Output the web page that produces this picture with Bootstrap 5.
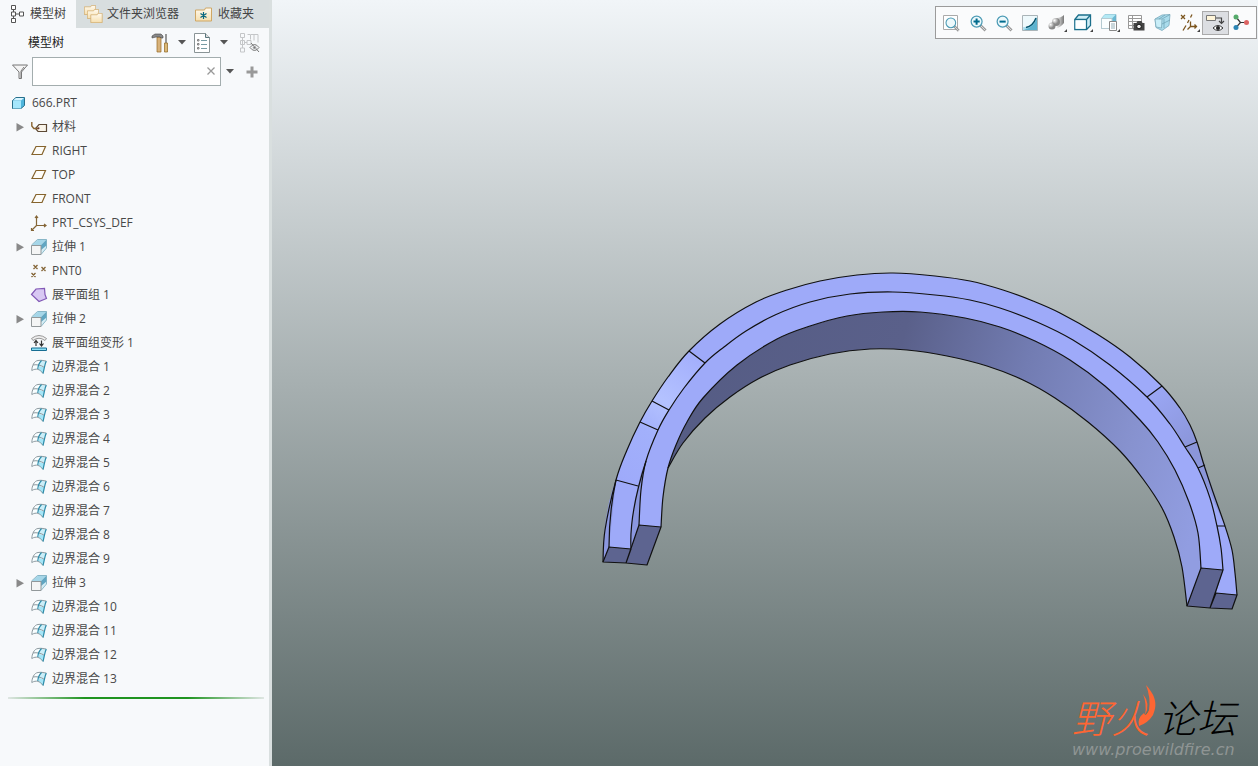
<!DOCTYPE html>
<html lang="zh-CN">
<head>
<meta charset="utf-8">
<meta name="viewport" content="width=device-width, initial-scale=1">
<title>666.PRT</title>
<link href="https://cdn.jsdelivr.net/npm/bootstrap@5.3.0/dist/css/bootstrap.min.css" rel="stylesheet">
<script src="https://cdn.jsdelivr.net/npm/bootstrap@5.3.0/dist/js/bootstrap.bundle.min.js"></script>
<style>
body{font-family:"Open Sans","Noto Sans CJK SC",sans-serif;font-size:12px;line-height:24px;color:#484848}
svg{display:block;flex:none;overflow:visible}
.side{width:272px;background:#f7f9fb;border-right:3px solid #d9dfdf}
.tabs{background:#d8dedf;height:28px}
.tabs button{border:0;background:none;color:#444;padding:0 8px 0 8px;gap:4px;line-height:28px}
.tabs button.active{background:#f7f9fb;width:76px;padding-left:10px;gap:6px}
.tool{border:0;background:none;padding:0;color:#555}
.tool.pair{gap:9px;margin-right:8px}
.headrow{height:29px;padding:0 9px 0 28px;color:#222}
.findrow{height:29px;padding-left:12px;gap:4px}
.find{width:189px}
.find input{height:29px;border:1px solid #a3adae;border-radius:0;font-size:12px;padding:2px 24px 2px 6px;background:#fff}
.find button{position:absolute;right:5px;top:9px}
.findrow .tool.more{margin:0 8px 0 1px}
.tree{padding-top:5px}
.tree li{height:24px;padding-left:31px;gap:5px}
.tree li.root{padding-left:11px}
.tree li.parent{padding-left:16px}
.tree button{width:10px;height:16px;border:0;background:none;padding:0}
.tree span{white-space:nowrap}
.endline{height:2px;margin:6px 5px 0 8px;background:linear-gradient(90deg,#dfe6e3,#1f9420 30%,#1f9420 70%,#dfe6e3)}
.view{background:linear-gradient(#f1f5f8,#5c6a69)}
.scene{position:absolute;inset:0;width:100%;height:100%}
.bar{position:absolute;top:6px;right:1px;width:322px;height:33px;padding:0 1px 0 2px;background:#fafbfc;border:1px solid #9b9b9b}
.bar button{flex:1 1 0;height:24px;border:1px solid transparent;background:none;padding:0}
.bar button.on{background:#dcdee2;border-color:#aaa}
.wm{position:absolute;right:18px;bottom:8px;width:168px}
.wm .name{font-family:"Liberation Sans","Noto Sans CJK SC",sans-serif;font-style:italic;font-weight:300;font-size:39px;line-height:38px;white-space:nowrap;color:#000;margin-bottom:3px}
.wm .name b{font-weight:300;color:#ff6633;margin-right:8px}
.wm .site{font:italic 16px/16px "DejaVu Sans",sans-serif;color:#8f9594}
.wm svg{position:absolute;left:64px;top:-17px}
</style>
</head>
<body>
<svg width="0" height="0" class="position-absolute" aria-hidden="true">
<defs>
<linearGradient id="gb" x1="0" x2="1" y2="1"><stop stop-color="#fff"/><stop offset="1" stop-color="#5fbfdf"/></linearGradient>
<linearGradient id="gf" x2="0" y2="1"><stop stop-color="#fffaf0"/><stop offset="1" stop-color="#f6dfae"/></linearGradient>
<symbol id="folder" viewBox="0 0 17 14"><path d="M.5 13.500V2.500h9l1-2h6v13z" fill="url(#gf)" stroke="#cfa765"/></symbol>
<symbol id="plane" viewBox="0 0 16 16"><path d="M5 3.500h9.500L11 11.500H1z" fill="#fdfcf8" stroke="#86642d" stroke-width="1.200"/></symbol>
<symbol id="ext" viewBox="0 0 16 16"><path d="M1 6 7 .5h8.500L10 6z" fill="#a5d6e8"/><path d="M10 6 15.500.5V9L10 15z" fill="#d4edf5"/><path d="M10 6 15.500.5v6L10 11z" fill="#61a6c2"/><path d="M.5 6 6.500.5h9V9L10 15.500" fill="none" stroke="#75aabd" stroke-width=".8"/><path d="M.5 6.500h9.500v9H.5z" fill="#f4f5f5" stroke="#92989a"/></symbol>
<symbol id="bb" viewBox="0 0 16 16"><path d="M.8 11.500C1 7 3 2 7 1.500c3-.5 5 0 8.300.6C14 5 13.500 9 12 14.500 9 11 6 9 .8 11.500z" fill="#f8feff"/><path d="M8 7c2 .3 3.700 1 5.700 1.500L12 14.500 7.500 10.500z" fill="#a5e5f7"/><path d="M10 2l5.300.1-1.500 6L8.500 6z" fill="#cbeef8"/><path d="M.8 11.500C1 7 3 2 7 1.500c3-.5 5 0 8.300.6M.8 11.500C5 9 9 10 12 14.500M2 6c4-.8 8 .2 11.700 2.500" fill="none" stroke="#8d9aa0"/><path d="M15.300 2.100C13.600 5 13.500 9 12 14.500M10.500 1.500C8 4 7 6.500 6.800 10" fill="none" stroke="#2c8ba9" stroke-width="1.200"/></symbol>
<symbol id="mag" viewBox="0 0 18 18"><path d="m10.500 10.500 6 6" stroke="#999" stroke-width="3"/><path d="m10.500 10.500 6 6" stroke="#ddd"/><circle cx="7" cy="7" r="5.800" fill="#edf9fc" stroke="#4c9bb5" stroke-width="1.300"/></symbol>
<symbol id="caret" viewBox="0 0 8 5"><path d="M0 0h8L4 4.500z" fill="#555"/></symbol>
<symbol id="tri" viewBox="0 0 8 10"><path d="M.5 1v8.500L8 5.200z" fill="#898989"/></symbol>
<linearGradient id="inner" gradientUnits="userSpaceOnUse" x1="660" y1="400" x2="1190" y2="540"><stop stop-color="#555c84"/><stop offset=".4" stop-color="#5a608a"/><stop offset=".63" stop-color="#727cb2"/><stop offset=".85" stop-color="#8792cf"/><stop offset="1" stop-color="#919de1"/></linearGradient>
<linearGradient id="outer" gradientUnits="userSpaceOnUse" x1="620" y1="480" x2="710" y2="350"><stop stop-color="#9eaafa"/><stop offset=".35" stop-color="#a2b0fb"/><stop offset=".57" stop-color="#b4c2ff"/><stop offset="1" stop-color="#9faafb"/></linearGradient>
<linearGradient id="rside" gradientUnits="userSpaceOnUse" x1="1150" y1="392" x2="1190" y2="445"><stop stop-color="#9ba7f5"/><stop offset="1" stop-color="#8b96da"/></linearGradient>
</defs></svg>

<div class="d-flex min-vh-100">
<aside class="side flex-shrink-0">
 <nav class="tabs d-flex" aria-label="导航器">
  <button class="active d-flex align-items-center"><svg width="14" height="18" fill="#fff" stroke="#555"><path d="M3.500 4.500v9M3.500 9h6" fill="none"/><path d="M1.500.500h4v4h-4zM1.500 7h4v4h-4zM9.500 7h4v4h-4zM1.500 13.500h4v4h-4z"/></svg>模型树</button>
  <button class="d-flex align-items-center"><svg width="19" height="18"><use href="#folder" width="12" height="10"/><use href="#folder" x="3" y="4" width="12" height="10"/><use href="#folder" x="6" y="8" width="13" height="10"/></svg>文件夹浏览器</button>
  <button class="d-flex align-items-center"><svg width="19" height="15"><use href="#folder" width="17" height="15"/><path d="M8.500 5v7M5.500 6.500l6 4M11.500 6.500l-6 4" stroke="#08677f" stroke-width="1.200"/></svg>收藏夹</button>
 </nav>
 <div class="headrow d-flex align-items-center">
  <span class="me-auto">模型树</span>
  <button class="tool pair d-flex align-items-center" aria-label="设置"><svg width="17" height="20"><path d="M5 4h4v15H5z" fill="#d8b27a" stroke="#956724" stroke-width=".7"/><path d="M0 5V3l3-2h6l2 2v2H9L8 4H4z" fill="#888" stroke="#444" stroke-width=".6"/><path d="M14 1v9" stroke="#777" stroke-width="1.500"/><path d="M12.500 10h3v9h-3z" fill="#dcb877" stroke="#8d641f" stroke-width=".7"/></svg><svg width="8" height="5"><use href="#caret"/></svg></button>
  <button class="tool pair d-flex align-items-center" aria-label="显示"><svg width="17" height="20"><path d="M.5.500h11l4 4v15H.5z" fill="#fff" stroke="#8a9496"/><path d="M11.500.500v4h4" fill="#ddd" stroke="#59767c"/><path d="M7 7.500h6M7 11.500h6M7 15.500h6" stroke="#789ca4"/><path d="M3.500 6.500h1.500v1.500H3.500zM3.500 10.500h1.500v1.500H3.500zM3.500 14.500h1.500v1.500H3.500z" stroke="#666" stroke-width=".8" fill="none"/></svg><svg width="8" height="5"><use href="#caret"/></svg></button>
  <button class="tool ms-1" aria-label="隐藏树列"><svg width="20" height="20" fill="none" stroke="#c4c6c8"><path d="M.5.500h4v4h-4zM.5 7.500h4v4h-4zM7 7.500h4v4H7zM.5 15h4v4h-4zM2.500 4v11M4.500 9.500H7M7.500 1.500h3v5M11 1.500h3v6M14 1.500h4v8"/><path d="M10 14.500q4.500-6 9 0-4.500 6-9 0M11 10l8 9" stroke="#777"/><circle cx="14.500" cy="14.500" r="1.500" fill="#777"/></svg></button>
 </div>
 <div class="findrow d-flex align-items-center">
  <svg width="16" height="16"><path d="M.5 1h15L9.500 8v6.500H7V8z" fill="#f5f5f5" stroke="#777"/><path d="M12 3 9 7v7" fill="none" stroke="#777"/></svg>
  <div class="find position-relative"><input class="form-control" type="text" aria-label="筛选"><button class="tool" aria-label="清除"><svg width="10" height="10"><path d="m1.500 1.500 7 7m0-7-7 7" stroke="#999" stroke-width="1.300"/></svg></button></div>
  <button class="tool more" aria-label="选项"><svg width="8" height="5"><use href="#caret"/></svg></button>
  <button class="tool" aria-label="添加"><svg width="12" height="12"><path d="M6 .5v11M.5 6h11" stroke="#999" stroke-width="3"/></svg></button>
 </div>
 <ul class="tree list-unstyled mb-0">
  <li class="root d-flex align-items-center"><svg width="16" height="16"><path d="M1.500 5.500 5 2.500h8.500v8L10 13.500H1.500z" fill="#4fb5dc" stroke="#28708c"/><path d="M2 5.500 5 3h8l-3 2.500z" fill="#d8f5ff"/><path d="M2 6h8v7.500H2z" fill="#a5e7fc"/></svg><span>666.PRT</span></li>
  <li class="parent d-flex align-items-center"><button aria-label="展开"><svg width="8" height="10"><use href="#tri"/></svg></button><svg width="16" height="16"><path d="M8 5.500h7.500v7H7L4.500 9.500z" fill="#f9f4e9" stroke="#5d4935" stroke-width="1.200"/><path d="M.8 3v4l2 2.500h4.500" fill="none" stroke="#8b6531" stroke-width="1.400"/><circle cx="7.500" cy="9.300" r="1" fill="#633"/></svg><span>材料</span></li>
  <li class="d-flex align-items-center"><svg width="16" height="16"><use href="#plane"/></svg><span>RIGHT</span></li>
  <li class="d-flex align-items-center"><svg width="16" height="16"><use href="#plane"/></svg><span>TOP</span></li>
  <li class="d-flex align-items-center"><svg width="16" height="16"><use href="#plane"/></svg><span>FRONT</span></li>
  <li class="d-flex align-items-center"><svg width="16" height="16" fill="none" stroke="#846536" stroke-width="1.200"><path d="M5.500 1.500v9h9M5.500 10.500l-5 5M4 3l1.500-2L7 3M13 9l2 1.500L13 12M.5 13v2.500H3"/></svg><span>PRT_CSYS_DEF</span></li>
  <li class="parent d-flex align-items-center"><button aria-label="展开"><svg width="8" height="10"><use href="#tri"/></svg></button><svg width="16" height="16"><use href="#ext"/></svg><span>拉伸 1</span></li>
  <li class="d-flex align-items-center"><svg width="16" height="16" stroke="#846536" stroke-width="1.300"><path d="m2.500 2 4 4m0-4-4 4M10.500 4l4 4m0-4-4 4M.5 10l4 4m0-4-4 4"/></svg><span>PNT0</span></li>
  <li class="d-flex align-items-center"><svg width="16" height="16"><path d="M.5 7.500 5 2l8.500-.5.5 6 1.500 4L8 14.500z" fill="#d8c8f3" stroke="#8259b6" stroke-width="1.200"/></svg><span>展平面组 1</span></li>
  <li class="parent d-flex align-items-center"><button aria-label="展开"><svg width="8" height="10"><use href="#tri"/></svg></button><svg width="16" height="16"><use href="#ext"/></svg><span>拉伸 2</span></li>
  <li class="d-flex align-items-center"><svg width="16" height="16"><path d="M.5 3.500Q8-2.500 15.500 3.500L14 5.500Q8 1 2 5.500z" fill="#eee" stroke="#999"/><path d="M5 11V6M3 8l2-2.500L7 8M10.500 5.500v5M8.500 8.500l2 2.500 2-2.500" fill="none" stroke="#333" stroke-width="1.200"/><path d="M.5 13h15v2.500H.5z" fill="#8de0f5" stroke="#176d92"/></svg><span>展平面组变形 1</span></li>
  <li class="d-flex align-items-center"><svg width="16" height="16"><use href="#bb"/></svg><span>边界混合 1</span></li>
  <li class="d-flex align-items-center"><svg width="16" height="16"><use href="#bb"/></svg><span>边界混合 2</span></li>
  <li class="d-flex align-items-center"><svg width="16" height="16"><use href="#bb"/></svg><span>边界混合 3</span></li>
  <li class="d-flex align-items-center"><svg width="16" height="16"><use href="#bb"/></svg><span>边界混合 4</span></li>
  <li class="d-flex align-items-center"><svg width="16" height="16"><use href="#bb"/></svg><span>边界混合 5</span></li>
  <li class="d-flex align-items-center"><svg width="16" height="16"><use href="#bb"/></svg><span>边界混合 6</span></li>
  <li class="d-flex align-items-center"><svg width="16" height="16"><use href="#bb"/></svg><span>边界混合 7</span></li>
  <li class="d-flex align-items-center"><svg width="16" height="16"><use href="#bb"/></svg><span>边界混合 8</span></li>
  <li class="d-flex align-items-center"><svg width="16" height="16"><use href="#bb"/></svg><span>边界混合 9</span></li>
  <li class="parent d-flex align-items-center"><button aria-label="展开"><svg width="8" height="10"><use href="#tri"/></svg></button><svg width="16" height="16"><use href="#ext"/></svg><span>拉伸 3</span></li>
  <li class="d-flex align-items-center"><svg width="16" height="16"><use href="#bb"/></svg><span>边界混合 10</span></li>
  <li class="d-flex align-items-center"><svg width="16" height="16"><use href="#bb"/></svg><span>边界混合 11</span></li>
  <li class="d-flex align-items-center"><svg width="16" height="16"><use href="#bb"/></svg><span>边界混合 12</span></li>
  <li class="d-flex align-items-center"><svg width="16" height="16"><use href="#bb"/></svg><span>边界混合 13</span></li>
 </ul>
 <div class="endline"></div>
</aside>

<main class="view position-relative flex-grow-1 overflow-hidden">
 <svg class="scene" viewBox="272 0 986 766" stroke-linejoin="round" role="img" aria-label="零件模型">
  <path id="fInner" fill="url(#inner)"/>
  <path id="fOuter" fill="#9eaaf9"/>
  <path id="fLeft" fill="url(#outer)" d="M617 480Q626 450 640 423Q660 384 689 351L705 363Q684 388 669 410L658 430Q648 447 638 486z"/>
  <path fill="url(#rside)" d="M1147 397 1162 386Q1186 412 1197 442L1205 466 1225 526H1217Q1210 495 1198 468 1180 433 1147 397z"/>
  <path fill="#9eaaf9" d="m1204 480 21 46h-8z"/>
  <path fill="#8b97df" d="M603 562Q603 512 616 480L609 547zM638 486Q641 470 646 461L641 490 639 525 631 549Q631 514 638 486z"/>
  <path id="fFront" fill="#9eaaf9"/>
  <g fill="none" stroke="#111" stroke-width="1.200"><path id="l1"/><path id="l2"/><path id="l3"/><path id="l4"/>
  <path d="M689 351 705 363M652 401 669 410M640 422 658 430M616 480 638 486M1147 397 1162 386M1185 447 1197 442M1198 468 1205 465M1217 526H1225M616 480Q609 512 609 547M646 461Q629 514 631 549"/></g>
  <g fill="#5d6490" stroke="#111" stroke-width="1.200"><path d="M609 547 631 549 626 563 603 562zM639 525 661 527 647 565 626 563zM1216 593 1237 595 1232 609 1210 608zM1201 568 1223 570 1210 608 1187 606z"/></g>
 </svg>

 <div class="bar d-flex align-items-center" role="toolbar" aria-label="视图工具栏">
  <button aria-label="重新调整" class="d-flex align-items-center justify-content-center"><svg width="16" height="16"><path d="M.5.500h14v14H.5z" fill="#fff" stroke="#aaa"/><use href="#mag" x="2" y="2" width="15" height="15"/></svg></button>
  <button aria-label="放大" class="d-flex align-items-center justify-content-center"><svg width="16" height="16"><use href="#mag" width="17" height="17"/><path d="M6.600 3.500v6.200M3.500 6.600h6.200" stroke="#006b8e" stroke-width="2"/></svg></button>
  <button aria-label="缩小" class="d-flex align-items-center justify-content-center"><svg width="16" height="16"><use href="#mag" width="17" height="17"/><path d="M3.500 6.600h6.200" stroke="#006b8e" stroke-width="2"/></svg></button>
  <button aria-label="重画" class="d-flex align-items-center justify-content-center"><svg width="16" height="16"><path d="M.5.500h15v15H.5z" fill="url(#gb)" stroke="#aab4b8"/><path d="M15 2v13H2q11-3 13-13z" fill="#5db3cf"/><path d="M1 1h14q-1 8-10 11H1z" fill="#eef9fc"/><path d="M4 12.500Q11 11 14 3" fill="none" stroke="#07536c" stroke-width="1.500"/></svg></button>
  <button aria-label="渲染选项" class="d-flex align-items-center justify-content-center"><svg width="18" height="18"><defs><radialGradient id="ball" cx=".3" cy=".3"><stop stop-color="#fff"/><stop offset="1" stop-color="#888"/></radialGradient><linearGradient id="cyl"><stop stop-color="#fff"/><stop offset="1" stop-color="#777"/></linearGradient></defs><path d="M8 4q5 0 8-3v8q-4 5-8 5z" fill="url(#cyl)"/><circle cx="8" cy="8" r="4" fill="url(#ball)"/><circle cx="4" cy="12" r="3.500" fill="url(#ball)"/><path d="M19 15v3h-3z" fill="#444"/></svg></button>
  <button aria-label="显示样式" class="d-flex align-items-center justify-content-center"><svg width="18" height="18"><path d="M.8 5.500 4.500 1h12v10.500l-4 4H.8z" fill="#cfeef7" stroke="#1b6f8b" stroke-width="1.300"/><path d="M.8 5.500h11.700v10M12.500 5.500l4-4.500" fill="none" stroke="#1b6f8b" stroke-width="1.300"/><path d="M1.600 6.300h10v8.500h-10z" fill="#fff"/><path d="M19 15v3h-3z" fill="#444"/></svg></button>
  <button aria-label="已保存方向" class="d-flex align-items-center justify-content-center"><svg width="18" height="18"><path d="M.5 4.500 4 .500h11v11l-4 3H.5z" fill="#69b9d4" stroke="#77aabd" stroke-width=".7"/><path d="M.5 4.500 4 .500h11l-4 4z" fill="#b4e9f5"/><path d="M.5 4.500H11v10H.5z" fill="#fafeff" stroke="#b5cbd2"/><path d="M8.500 7.500h7v9h-7z" fill="#fff" stroke="#888"/><path d="M10 10h4M10 12h4M10 14h4" stroke="#789aa5" stroke-width=".8"/><path d="M19 15v3h-3z" fill="#444"/></svg></button>
  <button aria-label="视图管理器" class="d-flex align-items-center justify-content-center"><svg width="17" height="17"><path d="M.5 1.500h13v13H.5zM.5 4.500h13M.5 7.500h13M.5 11.500h13M4.500 1.500v13" fill="#fff" stroke="#999"/><path d="M5.500 9h3l1-2h4l1 2h2v7.500h-11z" fill="#444"/><circle cx="11" cy="12.500" r="2.300" fill="#eee" stroke="#111"/></svg></button>
  <button aria-label="透视图" class="d-flex align-items-center justify-content-center"><svg width="17" height="17"><path d="M1 5 8 1l8-.5-1 11-7 5-6-3z" fill="#aadcec" stroke="#79aabd" stroke-width=".8"/><path d="M1 5h7l-.5 9-5.500-1z" fill="#c9eef8" stroke="#7dabbb" stroke-width=".8"/><path d="M8 5l8-4.500M5 5l6-4M10 5v9M8 10l8-4" fill="none" stroke="#6c9fb2" stroke-width=".7"/></svg></button>
  <button aria-label="基准显示过滤器" class="d-flex align-items-center justify-content-center"><svg width="18" height="18" fill="none" stroke="#7b551e" stroke-width="1.300"><path d="m1 1 4 4m0-4-4 4M12 .5l-1.500 3M9 6l-1.500 3M6 11.500l-3 5M10.500 7.500v5h6M10.500 12.500l-3 3M14.500 10.500l2 2-2 2"/><path d="M20 15v3h-3z" fill="#444" stroke="none"/></svg></button>
  <button aria-label="注释显示" aria-pressed="true" class="on d-flex align-items-center justify-content-center"><svg width="18" height="18"><path d="M.5 1.500h9v5h-9z" fill="#fff5d9" stroke="#777"/><path d="M10 4h5.500v5M13 7l2.500 2.500L18 7" fill="none" stroke="#444" stroke-width="1.200"/><path d="M7 14q5-5 10 0-5 5-10 0z" fill="#fff" stroke="#333"/><circle cx="12" cy="14" r="2" fill="#222"/></svg></button>
  <button aria-label="旋转中心" class="d-flex align-items-center justify-content-center"><svg width="17" height="17"><path d="M3 3l4.500 5.500L3 13.500M7.500 8.500H13" fill="none" stroke="#333" stroke-width="1.200"/><circle cx="3" cy="3" r="2.500" fill="#55aa6b"/><circle cx="3" cy="13.500" r="2.500" fill="#2d86b5"/><circle cx="13.500" cy="8.500" r="2.500" fill="#dc6463"/></svg></button>
 </div>

 <div class="wm"><div class="name"><b>野火</b>论坛</div><svg width="24" height="44"><path d="M10 1C17 9 23 18 17 31Q12 39 3 42Q1 34 8 29Q10 34 13 26Q15 14 10 1zM7 10Q15 20 9 31Q11 20 7 10z" fill="#ff6633"/></svg><div class="site">www.proewildfire.cn</div></div>
</main>
</div>
<script>
// Edge curves of the half ring, each a list of x,y points from the left foot to the right foot
const outer=[603,562,605,530,616,480,627,450,640,422,652,401,668,377,689,351,720,324,756,302,787,290,820,281,857,275,893,273,935,276,970,281,1003,290,1033,301,1060,313,1097,334,1130,357,1162,386,1180,408,1190,425,1197,442,1204,465,1213,492,1225,526,1232,550,1235,573,1237,595];
const mid=[639,525,641,490,646,461,658,430,669,410,684,388,705,363,724,347,746,331,775,315,810,302,850,294,893,292,935,295,970,300,1000,308,1037,322,1073,340,1110,365,1147,397,1170,424,1185,447,1198,468,1210,498,1217,526,1221,548,1223,570];
const inner=[661,527,663,497,668,468,676,445,687,422,703,398,737,365,777,339,810,326,847,316,883,312,920,312,965,318,1000,327,1035,341,1070,360,1105,386,1140,420,1158,442,1175,470,1189,502,1198,533,1201,568];
const back=[668,468,683,443,705,418,730,397,758,379,790,365,830,354,870,349,907,350,947,356,987,366,1023,380,1055,398,1088,422,1120,451,1143,479,1162,508,1174,537,1182,567,1187,606];
// Smooth path through the points (Catmull-Rom turned into cubic segments)
function curve(a,start='M'){
  const p=[];for(let i=0;i<a.length;i+=2)p.push([a[i],a[i+1]]);
  let d=start+p[0];
  for(let i=0;i<p.length-1;i++){
    const q=p[i-1]||p[i],r=p[i],s=p[i+1],t=p[i+2]||s;
    d+='C'+[r[0]+(s[0]-q[0])/6,r[1]+(s[1]-q[1])/6,s[0]-(t[0]-r[0])/6,s[1]-(t[1]-r[1])/6,s[0],s[1]];
  }
  return d;
}
function flip(a){const r=[];for(let i=a.length-2;i>=0;i-=2)r.push(a[i],a[i+1]);return r}
const set=(id,d)=>document.getElementById(id).setAttribute('d',d);
set('l1',curve(outer));set('l2',curve(mid));set('l3',curve(inner));set('l4',curve(back));
set('fOuter',curve(outer)+'L1216 593'+curve(flip(mid),'L')+'L631 549 609 547z');
set('fFront',curve(mid)+curve(flip(inner),'L')+'z');
set('fInner',curve(back)+curve(flip(inner.slice(4)),'L')+'z');
</script>
</body>
</html>
